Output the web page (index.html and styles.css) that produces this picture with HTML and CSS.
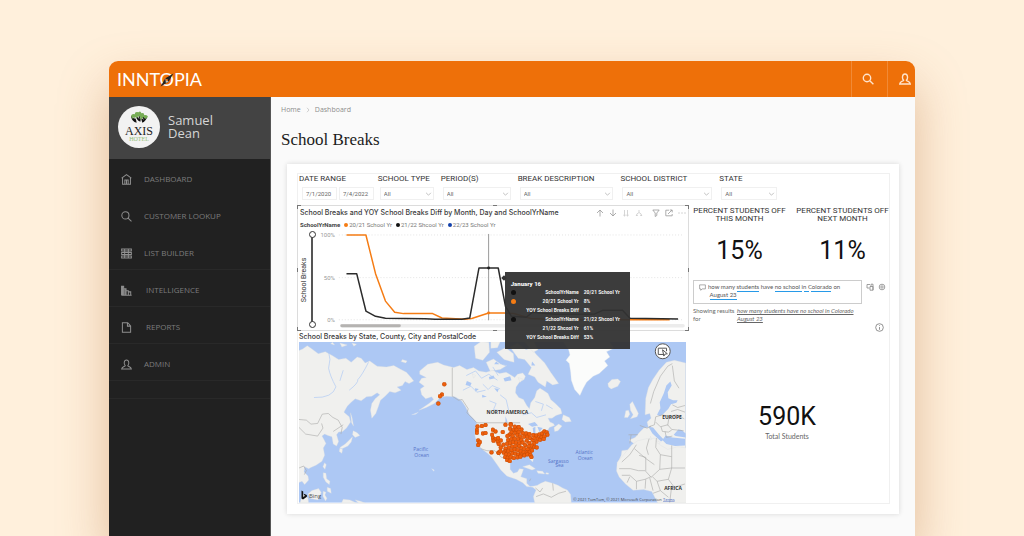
FILE: index.html
```html
<!DOCTYPE html>
<html lang="en">
<head>
<meta charset="utf-8">
<meta name="viewport" content="width=device-width, initial-scale=1">
<title>School Breaks</title>
<link rel="stylesheet" href="styles.css">
</head>
<body>
<div class="window">
  <header class="topbar">
    <a class="logo" href="#">INNT<span class="logo-o">O<svg class="needle" viewBox="0 0 12 12"><path d="M11.5.5 7.4 7.4 4.6 4.6z" fill="#222"/><path d="M.5 11.5 4.6 4.6 7.4 7.4z" fill="#222"/><path d="M4.6 4.6 7.4 7.4 5 8.6z" fill="#b9c0c4"/><circle cx="6" cy="6" r=".8" fill="#ee7009"/></svg></span>PIA</a>
    <button class="top-btn" aria-label="Search"><svg viewBox="0 0 12 12"><circle cx="5" cy="5" r="3.7"/><path d="m7.8 7.8 3.6 3.4"/></svg></button>
    <button class="top-btn top-user" aria-label="Account"><svg viewBox="0 0 12 12"><path d="M4.6 7.3C2.9 5.6 3 1 6 1s3.100 4.600 1.400 6.300c.3 1.200 3.600.7 3.900 3.700H.7C1 8 4.300 8.500 4.600 7.300z"/></svg></button>
  </header>
  <div class="body">
    <aside class="sidebar">
      <div class="user">
        <div class="avatar">
          <svg viewBox="0 0 20 14"><g fill="#111"><path d="M1 5q5-1 6 7-5-1-6-7zM6 3q6 0 5 8-5-2-5-8zM12 5q5-1 6 1-1 4-5 6-2-4-1-7z"/></g><g fill="#76ac55"><path d="M1 5q1-3 4-2 0-3 4-2 2-2 3 1 3-1 3 2 3-1 4 2l-3 2-2-2-2 3-2-4-3 2-2-1-2 2z"/></g><path d="M4 6l1.500 2M8.500 5l1 2.500M13 7l1 1.500" stroke="#f2f2f2" stroke-width=".8"/></svg>
          <span class="avatar-name">AXIS</span><span class="avatar-sub">HOTEL</span>
        </div>
        <div class="user-name">Samuel<br>Dean</div>
      </div>
      <nav class="nav">
        <a href="#"><svg viewBox="0 0 12 12"><path d="M.7 4.500 6 .7l5.300 3.800M1.700 4v7.300h8.600V4M4.200 11V6.500h3.600V11M6 6.500V11"/></svg>DASHBOARD</a>
        <a href="#"><svg viewBox="0 0 12 12"><circle cx="4.800" cy="4.800" r="3.900"/><path d="m7.700 7.700 3.700 3.600"/></svg>CUSTOMER LOOKUP</a>
        <a href="#"><svg viewBox="0 0 12 12"><path d="M.7 1h10.600v2.200H.7zM.7 4.800h10.600V7H.7zM.7 8.600h10.600v2.200H.7zM4 1v10M8 1v10"/></svg>LIST BUILDER</a>
        <a href="#" class="wide"><svg viewBox="0 0 12 12"><path d="M.6 11.300V1.500h2.300v9.800M3 4h2.500v7M5.500 6.200H8v5M8 7.500h2.600v3.700M.6 11.300h11M1.700 2v9M4.300 4v7"/></svg>INTELLIGENCE</a>
        <a href="#" class="wide"><svg viewBox="0 0 12 12"><path d="M1.500.8h5.800l3.200 3.400v7.100h-9zM7 1v3.500h3.500"/></svg>REPORTS</a>
        <a href="#"><svg viewBox="0 0 12 12"><path d="M4.600 7.300C2.900 5.600 3 1 6 1s3.100 4.600 1.400 6.300c.3 1.200 3.600.7 3.900 3.700H.7C1 8 4.300 8.500 4.600 7.300z"/></svg>ADMIN</a>
      </nav>
      <div class="nav-end"></div>
    </aside>
    <main class="main">
      <nav class="crumbs"><a href="#">Home</a><svg viewBox="0 0 4 6"><path d="m1 .8 2 2.200-2 2.200"/></svg><a href="#">Dashboard</a></nav>
      <h1>School Breaks</h1>
      <section class="card">
        <div class="report">
          <form class="filters">
            <div class="filter"><label for="from">DATE RANGE</label><div class="dates"><input id="from" value="7/1/2020"><input aria-label="End date" value="7/4/2022"></div></div>
            <div class="filter"><label for="type">SCHOOL TYPE</label><div class="pick"><select id="type"><option>All</option></select><svg viewBox="0 0 8 5"><path d="m1 1 3 3 3-3"/></svg></div></div>
            <div class="filter"><label for="period">PERIOD(S)</label><div class="pick"><select id="period"><option>All</option></select><svg viewBox="0 0 8 5"><path d="m1 1 3 3 3-3"/></svg></div></div>
            <div class="filter"><label for="desc">BREAK DESCRIPTION</label><div class="pick"><select id="desc"><option>All</option></select><svg viewBox="0 0 8 5"><path d="m1 1 3 3 3-3"/></svg></div></div>
            <div class="filter"><label for="district">SCHOOL DISTRICT</label><div class="pick"><select id="district"><option>All</option></select><svg viewBox="0 0 8 5"><path d="m1 1 3 3 3-3"/></svg></div></div>
            <div class="filter"><label for="state">STATE</label><div class="pick"><select id="state"><option>All</option></select><svg viewBox="0 0 8 5"><path d="m1 1 3 3 3-3"/></svg></div></div>
          </form>
          <div class="columns">
            <div class="left">
              <section class="chart">
                <i class="h tl"></i><i class="h tr"></i><i class="h bl"></i><i class="h br"></i><i class="h t"></i><i class="h b"></i><i class="h l"></i><i class="h r"></i>
                <div class="chart-head">
                  <h2>School Breaks and YOY School Breaks Diff by Month, Day and SchoolYrName</h2>
                  <div class="tools">
                    <button aria-label="Drill up"><svg viewBox="0 0 8 8"><path d="M4 7.500V1M1 4l3-3 3 3"/></svg></button>
                    <button aria-label="Drill down"><svg viewBox="0 0 8 8"><path d="M4 .5V7M1 4l3 3 3-3"/></svg></button>
                    <button class="dim" aria-label="Next level"><svg viewBox="0 0 8 8"><path d="M2.500 1v6M5.500 1v6M1.300 6l1.200 1L3.700 6M4.300 6l1.200 1 1.200-1"/></svg></button>
                    <button class="dim" aria-label="Expand all"><svg viewBox="0 0 8 8"><path d="M4 1v2.500L1.800 5v2M4 3.500 6.200 5v2M1 6l.8 1 .8-1M5.400 6l.8 1 .8-1"/></svg></button>
                    <button class="gap" aria-label="Filters"><svg viewBox="0 0 8 8"><path d="M.8 1h6.400L4.800 4v2.500l-1.600 1V4z"/></svg></button>
                    <button aria-label="Focus mode"><svg viewBox="0 0 8 8"><path d="M4 1.200H.8v5.600h6.400V5M3 5l4-4M4.800 1h2.400v2.400"/></svg></button>
                    <button aria-label="More options"><svg viewBox="0 0 8 8"><path d="M.5 4h1M3.500 4h1M6.500 4h1"/></svg></button>
                  </div>
                </div>
                <div class="legend"><b>SchoolYrName</b><span class="key orange">20/21 School Yr</span><span class="key black">21/22 Shcool Yr</span><span class="key blue">22/23 School Yr</span></div>
                <div class="plot">
                  <span class="axis">School Breaks</span>
                  <div class="range"><input type="range" aria-label="Minimum" value="0"><input type="range" aria-label="Maximum" value="100"></div>
                  <svg class="lines" viewBox="318 230 370 100">
                    <g class="tick"><text x="334" y="237">100%</text><text x="334" y="280">50%</text><text x="334" y="323">0%</text></g>
                    <path d="M338 235h348M338 278h348M338 320.500h348" stroke="#ddd" stroke-width=".8" stroke-dasharray="1 2"/>
                    <path d="M341 326.500h344" stroke="#ececec" stroke-width="3.500" stroke-linecap="round"/><path d="M341 326.500h58" stroke="#b5b3b1" stroke-width="3" stroke-linecap="round"/>
                    <path d="M489 234v87" stroke="#999" stroke-width="1"/>
                    <g fill="none" stroke-width="1.500" stroke-linejoin="round">
                      <path stroke="#f57c14" d="M345.700 235h19.600l9.700 39 10 27.700 9.300 11.300 9 1.300h29.300l9.400 4.400 23 1.300 7-.7 17-5.600h15.500l10 .5 17 5 30 1.200h110"/>
                      <path stroke="#2b2b2b" d="M345.700 274H356l9.300 37.700 9.700 5.300 10 2 40 .4 10 .6h27l8-1.300 9.300-50.400h19.400L506 307l6 10 15 1 6-5 23 2 40-.4 8-3.600h20l7.500 8 48.500.8"/>
                    </g>
                    <circle cx="489" cy="268.300" r="1.500" fill="#222"/><circle cx="489" cy="313.700" r="1.500" fill="#f57c14"/>
                  </svg>
                </div>
                <div class="tooltip" role="tooltip">
                  <strong>January 16</strong>
                  <dl>
                    <dt class="dot-black">SchoolYrName</dt><dd>20/21 School Yr</dd>
                    <dt class="dot-orange">20/21 School Yr</dt><dd>8%</dd>
                    <dt>YOY School Breaks Diff</dt><dd>8%</dd>
                    <dt class="dot-black">SchoolYrName</dt><dd>21/22 Shcool Yr</dd>
                    <dt>21/22 Shcool Yr</dt><dd>61%</dd>
                    <dt>YOY School Breaks Diff</dt><dd>53%</dd>
                  </dl>
                </div>
              </section>
              <h2 class="map-title">School Breaks by State, County, City and PostalCode</h2>
              <svg class="map" viewBox="299 342 388 161">
                <defs><marker id="pin" viewBox="-7 -7 14 14" markerWidth="14" markerHeight="14" markerUnits="userSpaceOnUse"><circle r="6" fill="#ef5f0c" stroke="#c04a04" stroke-width="1.600"/></marker></defs>
                <rect x="299" y="342" width="388" height="161" fill="#adc8f4"/>
                <g transform="translate(290 335) scale(.33333)">
                  <g fill="#f0f0ee" stroke="#dcdfe2" stroke-width="1">
                    <path d="M20 50 38 42 52 32 66 42 85 56 106 50 128 62 146 74 168 70 184 82 202 66 214 70 226 84 240 78 262 94 290 96 312 92 334 104 350 112 364 128 372 138 358 146 346 140 338 152 322 156 334 166 316 174 300 170 286 184 272 196 266 214 258 236 246 250 242 226 246 206 256 192 270 180 262 174 246 184 230 186 214 198 196 192 184 202 172 214 162 232 178 246 182 262 170 280 158 290 146 292 140 300 146 320 140 334 130 328 126 306 114 302 104 298 96 304 102 314 108 326 100 340 104 362 96 380 78 392 64 398 56 402 44 396 42 412 54 424 56 436 44 450 36 440 20 446z"/>
                    <path d="M182 234l5 16 4 24-6-10zM190 288l12 6 8 8-14 6-8-8zM188 306l-4 16-10 12-18 8-6-4 16-10 14-14zM150 340l8 4-2 12-8-6zM104 384l5 6-4 14-6-8zM100 414l8 2 2 16 10 8-2 10-10-8-8-14zM112 458l10 4 2 14-12-6zM66 468l20-6 8 12-10 22-22-4-8-14zM38 478l16 12 2 15H30zM100 470l8 3-3 8 6 10-4 8-8-14zM160 494l20 2 20 9h-45zM196 496l16 4 14 5h-20zM128 22l6 8-12-4zM150 24l22 6-16 6zM186 24l14 4-8 6zM338 74l14 4-4 6-14-4z"/>
                    <path d="M390 108 414 88 444 82 462 90 492 98 510 92 532 104 552 98 568 108 590 112 610 106 630 116 650 112 664 120 676 128 684 118 700 114 708 124 704 134 690 142 680 156 678 174 688 188 702 194 712 212 720 222 724 204 736 188 742 168 752 160 764 168 776 176 784 194 798 206 814 222 818 236 800 242 788 250 776 250 782 262 792 266 796 272 780 278 776 286 762 294 750 304 742 322 732 338 730 350 726 358 732 374 730 382 720 372 716 362 696 364 680 370 672 374 662 386 662 404 672 416 684 412 690 402 702 404 698 416 694 426 712 432 712 446 722 456 734 454 744 452 754 446 768 440 790 446 806 452 820 460 834 466 844 480 846 505H736L732 486 740 466 730 458 712 456 700 444 680 434 652 424 634 406 620 386 606 366 594 356 576 342 562 324 556 302 558 280 562 264 552 252 540 240 528 216 516 198 496 186 470 184 452 188 434 206 410 218 388 226 418 206 432 194 426 186 408 192 396 180 392 162 404 154 388 142 396 130 410 128 390 118z"/>
                    <path d="M554 34l20-14 24 2 2 30-20 24-22-6zM590 82l22-10 22 16 18 4-20 12-30 4zM622 52l26-14 24 18 2 26-30-8zM662 36l22-12 26 20 16-6 14 20 26 26 18 28 24 34-18 4-18-12-4 18-22-14-10-16-20-8 10-20-20-24-20-4zM604 20h28l-8 18-20 2zM548 116l10 6-6 8zM686 128l14 4-8 10z"/>
                    <path d="M704 20h30l12 24-14 8zM822 240l18 8 6 12-18 2-10-8zM794 278l14-10 10 6-12 14-10 2zM700 396l20-6 18 12-10 4zM742 408l18 2 6 8-20-2zM770 414l8 1-1 4-8-1zM956 146l12-12 18-2 8 8-8 14-20 8-8-6z"/>
                    <path d="M1022 208l8-8 8 16 10 20-4 10-20 6 8-12-8-14zM1010 228l8-2 4 12-6 10-10 0zM1070 190l8-32 14-26 18-26 22-24 24-6 34 8v280l-8 18-10-4-16 8-26-6-8 6-14-14-4 12-12-22-18-8-18 6-22 2-10 14-12 12-16 2-8-10 8-18 2-14 26-4 14-2-4-16-14-10 18-8 14-16 12-12 14-2-4-16 12-12-4-14-14 4z"/>
                    <path d="M1012 350l16-20 18-12 26-6 32-2 8 20 24 14 30-8 30 4v165h-90l-18-34-24-6-32 2-22-18-20-22-8-18 2-26z"/>
                    <path d="M1100 318l14 4-6 6zM1084 304l4 10-5 2z"/>
                  </g>
                  <path fill="#fbfcfb" stroke="#dde3ea" d="M822 20 838 44 842 60 830 76 840 86 844 112 846 136 856 164 872 182 882 160 892 142 912 124 930 116 956 92 946 78 962 66 952 50 974 40 960 20z"/>
                  <g fill="#adc8f4">
                    <path d="M1104 240l10-20-2-18 12-26 8-24 12-12 4 12-12 20 2 18 14 6 14 0-4 8-16 4-8 14-14 14-10 8zM1154 300l14-16 10 2 12 10 0 12-30-4zM1078 276l14 2 18 22 14 14-8 6-26-24zM1120 316l10-14 20 6 38 4v20l-30 2-26-6z"/>
                    <path d="M532 138l14 6-4 10-14-4zM556 160l12 2-10 8zM578 180l14 6-14 2zM614 160l14 2-4 10zM648 244l6 16-6 8zM716 268l20-6 10 10-18 4zM730 280l8-4 0 20-6 0zM744 276l16 4-10 12zM766 292l14-4-4 6zM598 126l14-4 4 8-16 4zM642 130l20-6 4 12-20 4zM620 80l10 8-16 0zM680 62l8 14-12 4zM728 80l10 12-12 0z"/>
                  </g>
                  <g fill="none" stroke="#adc8f4" stroke-width="2">
                    <path d="M116 50q8 22 0 50 4 22 22 56-10 34-66 32M236 82q-20 40-32 52 2 10-26 32M160 106l-10 32M530 122l28-14 18 22 22-12 26 18M520 166l24-12 18 18 26-6M604 68l22-8 12 28 26 10M580 148l16 16 12-12 24 10M600 198l20 8-8 18 20 4M632 180l18 14 8 34M700 240l26-6 16 14 28-8M610 96l16 26M654 90l24 10-14 18M738 200l24 8-6 20M770 210l20 12"/>
                  </g>
                  <g fill="none" stroke="#a9a9a7" stroke-width="1.800" stroke-linejoin="round">
                    <path d="M27 254l22 2 14 12 20-2 14-28 18-2 14 12 16 8 12 22-4 20M27 278l20 20 36 6 16-24-4-14M130 290l30-20M27 400l14-6 8 14-6 12M488 98v86l18 12 12-2 18 28-4 12 30 30h130M574 342l18 6 24 0 20 20 12 2 8 14M738 460l14 12 8-12M740 486l22-8 24 10 22-12 22-6M790 446l2 22M720 440l4-8"/>
                    <path d="M1084 206l10-36 20-46 22-30 14-8M1150 92l6 46 14 22M1080 276l16-6 4-24 20-6 22 6 20-6 24 12M1100 262l14 14 22-6 12 14 36 4M1140 246l-4 26M1116 276l4 14 18 2 10-6M1150 210l16 8 22-6M1146 230l20-6 22 8M1052 272l22 8 12-6M1018 300h28M1026 300l-4 26M1128 290l4 18 18-4"/>
                    <path d="M1042 330l-20 30-24 22M1036 342l32 28 28 20M1080 312l-8 28 6 20M1102 310l-2 28 14 22-2 44-26 24-16-18 0-42-20-6M1114 360l34 6v-34M1148 366l0 34-36 4M1148 400h40M1148 400l-10 34-34 6-14-14M1138 434l18 24 32-10M1104 440l10 28 24 20M990 402h34l24 6 20 0M998 422l24 0 20 18 26-6 18-8M1022 426l-8 18M1042 440l0 24M1070 434l-2 28M1082 430l10 38M1114 468l-22 8M1148 454l-6 50"/>
                  </g>
                  <path fill="#eaeef2" stroke="#d8e2ee" d="M426 402l8 4-2 4zM386 232l-20 8 12-2z"/>
                </g>
                <g transform="translate(290 335) scale(.33333)">
                  <polyline fill="none" marker-start="url(#pin)" marker-mid="url(#pin)" marker-end="url(#pin)" points="464,148 457,179 451,184 446,206 564,275 577,274 588,271 562,286 562,294 580,296 588,295 566,317 568,325 566,331 571,322 606,353 627,354 610,285 618,290 608,300 610,310 618,313 625,321 634,317 626,310 640,292 648,270 664,268 676,276 686,278 612,318 628,328"/>
                  <polyline transform="translate(570 0)" fill="none" marker-start="url(#pin)" marker-mid="url(#pin)" marker-end="url(#pin)" points="94,270 92,282 102,286 96,293 90,300 100,303 108,294 112,285 118,292 114,301 122,305 130,295 126,284 118,277 84,304 86,316 96,313 106,312 116,313 126,316 134,306 140,296 144,306 150,298 152,310 142,318 150,325 160,316 165,310 162,301 171,302 176,312 171,321 164,326 182,315 186,306 180,299 188,296 195,290 202,293 204,300 195,305 193,313 83,327 92,325 101,322 110,323 120,325 130,324 137,331 148,335 158,333 165,337 172,338 154,344 144,344 134,342 125,339 118,334 108,334 98,335 88,338 78,342 77,350 87,349 97,347 106,344 115,346 124,350 133,352 142,354 151,352 158,347 73,354 80,359 89,360 99,356 108,357 117,359 125,361 135,362 144,359 153,361 156,367 77,367 85,370 94,367 103,370 114,368 123,366 83,376 91,379 64,338 72,330 58,354 63,349"/>
                </g>
                <g class="water"><text x="421" y="451">Pacific</text><text x="422" y="457">Ocean</text><text x="585" y="454">Atlantic</text><text x="586" y="460">Ocean</text><text x="559" y="463">Sargasso</text><text x="560" y="467">Sea</text></g>
                <g class="places"><text x="508" y="414">NORTH AMERICA</text><text x="673" y="419">EUROPE</text><text x="674" y="490">AFRICA</text></g>
                <path d="m301.500 491 1.700.8v5.500l2-1.200-1-.5-.5-1.500 3.200 1.300v1.800L303 500l-1.500-1z" fill="#111"/>
                <text class="bing" x="309" y="498">Bing</text>
                <text class="copy" x="574" y="501">© 2021 TomTom, © 2021 Microsoft Corporation</text>
                <a href="#"><text class="copy terms" x="664" y="501">Terms</text></a>
                <g fill="none" stroke="#555" stroke-width="1"><circle cx="663.700" cy="351.300" r="7.500" fill="#fff"/><path d="M664.500 354.500h-5.300v-6.300h8.300v3M663.500 349.800l4.800 4-2.300.3-1.200 2z"/></g>
              </svg>
            </div>
            <div class="right">
              <div class="kpis">
                <div class="kpi"><h3>PERCENT STUDENTS OFF<br>THIS MONTH</h3><p>15%</p></div>
                <div class="kpi"><h3>PERCENT STUDENTS OFF<br>NEXT MONTH</h3><p>11%</p></div>
              </div>
              <div class="ask">
                <div class="ask-box">
                  <svg class="bubble" viewBox="0 0 8 8"><path d="M.7 1h6.600v4.600H3.500L2 7.200V5.600H.7z"/></svg>
                  <div class="ask-text"><textarea aria-label="Ask a question" rows="2">how many students have no school in Colorado on
 August 23</textarea><svg class="marks" viewBox="0 0 150 18"><path d="M29 8.500h22M67 8.500h27M96 8.500h5M103 8.500h20M2 16.500h27"/></svg></div>
                </div>
                <button aria-label="Convert to visual"><svg viewBox="0 0 8 8"><path d="M1 1.500h3M1 1.500V5h2.500M4 3.500h3v3.700H4zM5 3.500V1.200h2v6"/></svg></button>
                <button aria-label="Settings"><svg viewBox="0 0 8 8"><circle cx="4" cy="4" r="2.800"/><circle cx="4" cy="4" r="1.200"/></svg></button>
              </div>
              <div class="results"><span>Showing results for</span><a href="#">how many students have no school in Colorado August 23</a></div>
              <button class="info" aria-label="Information"><svg viewBox="0 0 8 8"><circle cx="4" cy="4" r="3.400"/><path d="M4 3.600V6M4 2v.7"/></svg></button>
              <div class="total"><p>590K</p><span>Total Students</span></div>
            </div>
          </div>
        </div>
      </section>
    </main>
  </div>
</div>
</body>
</html>
```
FILE: styles.css
```css
* { box-sizing: border-box; }
body {
  margin: 0;
  min-height: 100vh;
  padding: 61px 109px 0;
  display: flex;
  background: #fff0dc;
  font-family: Roboto, "Liberation Sans", sans-serif;
  color: #333;
  overflow-x: hidden;
}
h1, h2, h3, p, dl, dd { margin: 0; }
button { border: 0; padding: 0; background: none; }
svg { display: block; fill: none; stroke: none; }
a { color: inherit; text-decoration: none; }

.window {
  flex: 1;
  min-width: 0;
  display: flex;
  flex-direction: column;
  border-radius: 9px 9px 0 0;
  overflow: hidden;
  background: #fafafa;
  box-shadow: 0 24px 50px rgba(180, 110, 55, .4);
}

/* Top bar */
.topbar { display: flex; align-items: center; height: 36px; background: #ee7009; color: #fff; }
.logo { flex: 1; padding-left: 8px; font: 18px/20px Lato, sans-serif; }
.logo-o { position: relative; }
.needle { position: absolute; left: 0; top: 5px; width: 14px; height: 14px; }
.top-btn {
  width: 36px;
  height: 36px;
  display: grid;
  place-items: center;
  padding-right: 4px;
  border-left: 1px solid #f18a36;
}
.top-btn svg { width: 12px; height: 12px; stroke: #ffe3cc; stroke-width: 1.4; }
.top-user { width: 28px; padding: 0 0 0 7px; }

.body { flex: 1; display: flex; }

/* Sidebar */
.sidebar { width: 162px; background: #212121; border-right: 1px solid #555; }
.user { display: flex; align-items: center; gap: 8px; height: 62px; padding: 0 9px 3px; background: #434343; }
.avatar {
  width: 42px;
  height: 42px;
  border-radius: 50%;
  background: #f2f2f2;
  display: flex;
  flex-direction: column;
  align-items: center;
  padding-top: 5px;
}
.avatar svg { width: 19px; height: 14px; }
.avatar-name { font: 12px/12px "Liberation Serif", serif; color: #222; }
.avatar-sub { font: 6px/5px "Liberation Serif", serif; color: #93bf78; }
.user-name { font: 13px/13px "Open Sans", sans-serif; color: #d5d5d5; }
.nav a {
  display: flex;
  align-items: center;
  gap: 12px;
  height: 37px;
  padding: 4px 0 0 12px;
  border-bottom: 1px solid #292929;
  font: 8px/12px "Open Sans", sans-serif;
  color: #7c7c7c;
}
.nav a:nth-child(-n+2) { border-color: transparent; }
.nav .wide { gap: 14px; }
.nav svg { width: 11px; height: 11px; stroke: #8f8f8f; stroke-width: 1.1; }
.nav-end { height: 18px; border-bottom: 1px solid #292929; }

/* Page */
.main { flex: 1; min-width: 0; padding: 8px 16px 21px; }
.crumbs { display: flex; align-items: center; gap: 5px; margin-left: -6px; font: 7px/10px "Open Sans", sans-serif; color: #8d8d8d; }
.crumbs svg { width: 4px; height: 6px; stroke: #bbb; stroke-width: .7; }
h1 { margin: 14px 0 13px -6px; font: 17px/22px "Liberation Serif", serif; color: #1c1c1c; }
.card { padding: 9px 9px 10px 10px; background: #fff; box-shadow: 0 0 5px rgba(0, 0, 0, .14); }
.report { border: 1px solid #f0f0f0; padding-left: 1px; }

/* Filters */
.filters { display: grid; grid-template-columns: 79fr 63fr 77fr 103fr 99fr 65fr 105fr; padding-bottom: 5px; }
.filter label { display: block; font-size: 8px; line-height: 10px; padding-bottom: 3px; white-space: nowrap; }
.dates { display: grid; grid-template-columns: 1fr 1fr; gap: 2px; margin: 0 4px 0 3px; }
.dates input, .pick select {
  display: block;
  width: 100%;
  min-width: 0;
  height: 13px;
  padding: 0 0 0 3px;
  border: 1px solid #f0f0f0;
  border-radius: 0;
  background: #fff;
  font: 6px/10px Roboto, sans-serif;
  color: #666;
}
.pick { position: relative; margin: 0 7px 0 2px; }
.pick select { appearance: none; }
.pick svg { position: absolute; right: 2px; top: 5px; width: 7px; height: 4px; stroke: #aaa; stroke-width: .9; pointer-events: none; }

.columns { display: grid; grid-template-columns: 391fr 197fr; gap: 5px; }
.left { min-width: 0; padding-right: 2px; }

/* Line chart */
.chart { position: relative; height: 126px; margin: 0 -3px 0 -2px; padding: 1px 2px; border: 1px solid #dcdcdc; }
.chart-head { display: flex; justify-content: space-between; align-items: center; }
h2 { font: 500 7px/11px Inter, sans-serif; color: #3a3a3a; white-space: nowrap; }
.tools { display: flex; gap: 5px; }
.tools svg { width: 8px; height: 8px; stroke: #999; stroke-width: .8; }
.tools .dim { opacity: .5; }
.tools .gap { margin-left: 4px; }
.legend { display: flex; align-items: center; gap: 4px; padding-top: 2px; font-size: 6px; line-height: 10px; color: #777; }
.legend b { color: #444; }
.key::before { content: ""; display: inline-block; width: 4px; height: 4px; margin-right: 1px; border-radius: 50%; background: currentColor; }
.orange::before { background: #f57c14; }
.black::before { background: #111; }
.blue::before { background: #1240ab; }
.plot { display: flex; align-items: stretch; }
.axis { width: 8px; writing-mode: vertical-rl; transform: rotate(180deg); text-align: center; font-size: 7px; line-height: 8px; }
.range { position: relative; width: 8px; margin-right: 3px; }
.range::before { content: ""; position: absolute; left: 3px; top: 5px; bottom: 5px; width: 2px; background: #555; }
.range input { position: absolute; inset: 1px 0 2px; width: 8px; height: 97px; margin: 0; appearance: none; background: none; writing-mode: vertical-lr; direction: rtl; pointer-events: none; }
.range input::-webkit-slider-thumb { appearance: none; width: 7px; height: 7px; border: 1px solid #333; border-radius: 50%; background: #fff; pointer-events: auto; }
.lines { flex: 1; min-width: 0; }
.tick { font-size: 6px; fill: #999; text-anchor: end; }

/* Selection handles */
.h { position: absolute; width: 4px; height: 4px; border: 0 solid #777; }
.tl { left: -1px; top: -1px; border-width: 1px 0 0 1px; }
.tr { right: -1px; top: -1px; border-width: 1px 1px 0 0; }
.bl { left: -1px; bottom: -1px; border-width: 0 0 1px 1px; }
.br { right: -1px; bottom: -1px; border-width: 0 1px 1px 0; }
.t { left: 50%; top: -1px; border-top-width: 1px; }
.b { left: 50%; bottom: -1px; border-bottom-width: 1px; }
.l { left: -1px; top: 50%; border-left-width: 1px; }
.r { right: -1px; top: 50%; border-right-width: 1px; }

.tooltip {
  position: absolute;
  left: 53%;
  top: 66px;
  width: 125px;
  padding: 7px 7px 7px 6px;
  background: rgba(50, 50, 50, .95);
  color: #f2f2f2;
  font-size: 5px;
  font-weight: 700;
}
.tooltip::before { content: ""; position: absolute; left: -3px; top: 4px; width: 4px; height: 4px; background: #333; transform: rotate(45deg); }
.tooltip strong { display: block; font-size: 6px; line-height: 9px; }
.tooltip dl { display: grid; grid-template-columns: 68px 1fr; column-gap: 5px; line-height: 9px; white-space: nowrap; }
.tooltip dt { display: flex; align-items: center; justify-content: flex-end; }
.dot-black::before, .dot-orange::before { content: ""; width: 5px; height: 5px; margin-right: auto; border-radius: 50%; background: #111; }
.dot-orange::before { background: #f57c14; }

/* Map */
.map-title { padding-top: 1px; line-height: 10px; }
.map { width: 100%; font-family: "Open Sans", sans-serif; }
.water { font-size: 5px; fill: #5674c8; text-anchor: middle; }
.places { font-size: 5px; font-weight: 700; fill: #333; text-anchor: middle; }
.bing { font-size: 6px; fill: #555; }
.copy { font-size: 4px; fill: #444; }
.terms { fill: #3355bb; text-decoration: underline; }

/* Right column */
.right { min-width: 0; display: flex; flex-direction: column; }
.kpis { display: grid; grid-template-columns: 1fr 1fr; gap: 10px; text-align: center; }
.kpi { display: flex; flex-direction: column; align-items: center; min-width: 0; }
h3 { font-size: 8px; line-height: 8px; font-weight: 400; color: #333; padding-top: 2px; white-space: nowrap; }
.kpi p, .total p { font-size: 25px; line-height: 28px; color: #111; }
.kpi p { padding-top: 14px; }
.ask { display: flex; align-items: flex-start; gap: 2px; margin-top: 15px; }
.ask-box { flex: 0 1 169px; height: 24px; display: flex; gap: 2px; padding: 2px 0 0 5px; border: 1px solid #ccc; }
.bubble { width: 7px; height: 7px; margin-top: 1px; stroke: #777; stroke-width: .7; }
.ask-text { position: relative; flex: 1; min-width: 0; }
.ask textarea { display: block; width: 100%; height: 18px; padding: 0; border: 0; resize: none; overflow: hidden; background: none; font: 6px/8px Lato, sans-serif; color: #555; }
.marks { position: absolute; left: 0; top: 0; width: 150px; height: 18px; stroke: #279ae8; stroke-width: 1; pointer-events: none; }
.ask button svg { width: 8px; height: 8px; margin: 3px 0 0 2px; stroke: #888; stroke-width: .8; }
.results { display: grid; grid-template-columns: 42px 118px; gap: 2px; margin-top: 3px; font: 6px/8px Lato, sans-serif; color: #666; }
.results a { font-style: italic; text-decoration: underline; }
.info { align-self: flex-end; margin-right: 5px; }
.info svg { width: 9px; height: 9px; stroke: #777; stroke-width: .7; }
.total { text-align: center; padding: 71px 8px 0 0; }
.total span { display: block; font: 7px/10px Lato, sans-serif; color: #666; }
```
